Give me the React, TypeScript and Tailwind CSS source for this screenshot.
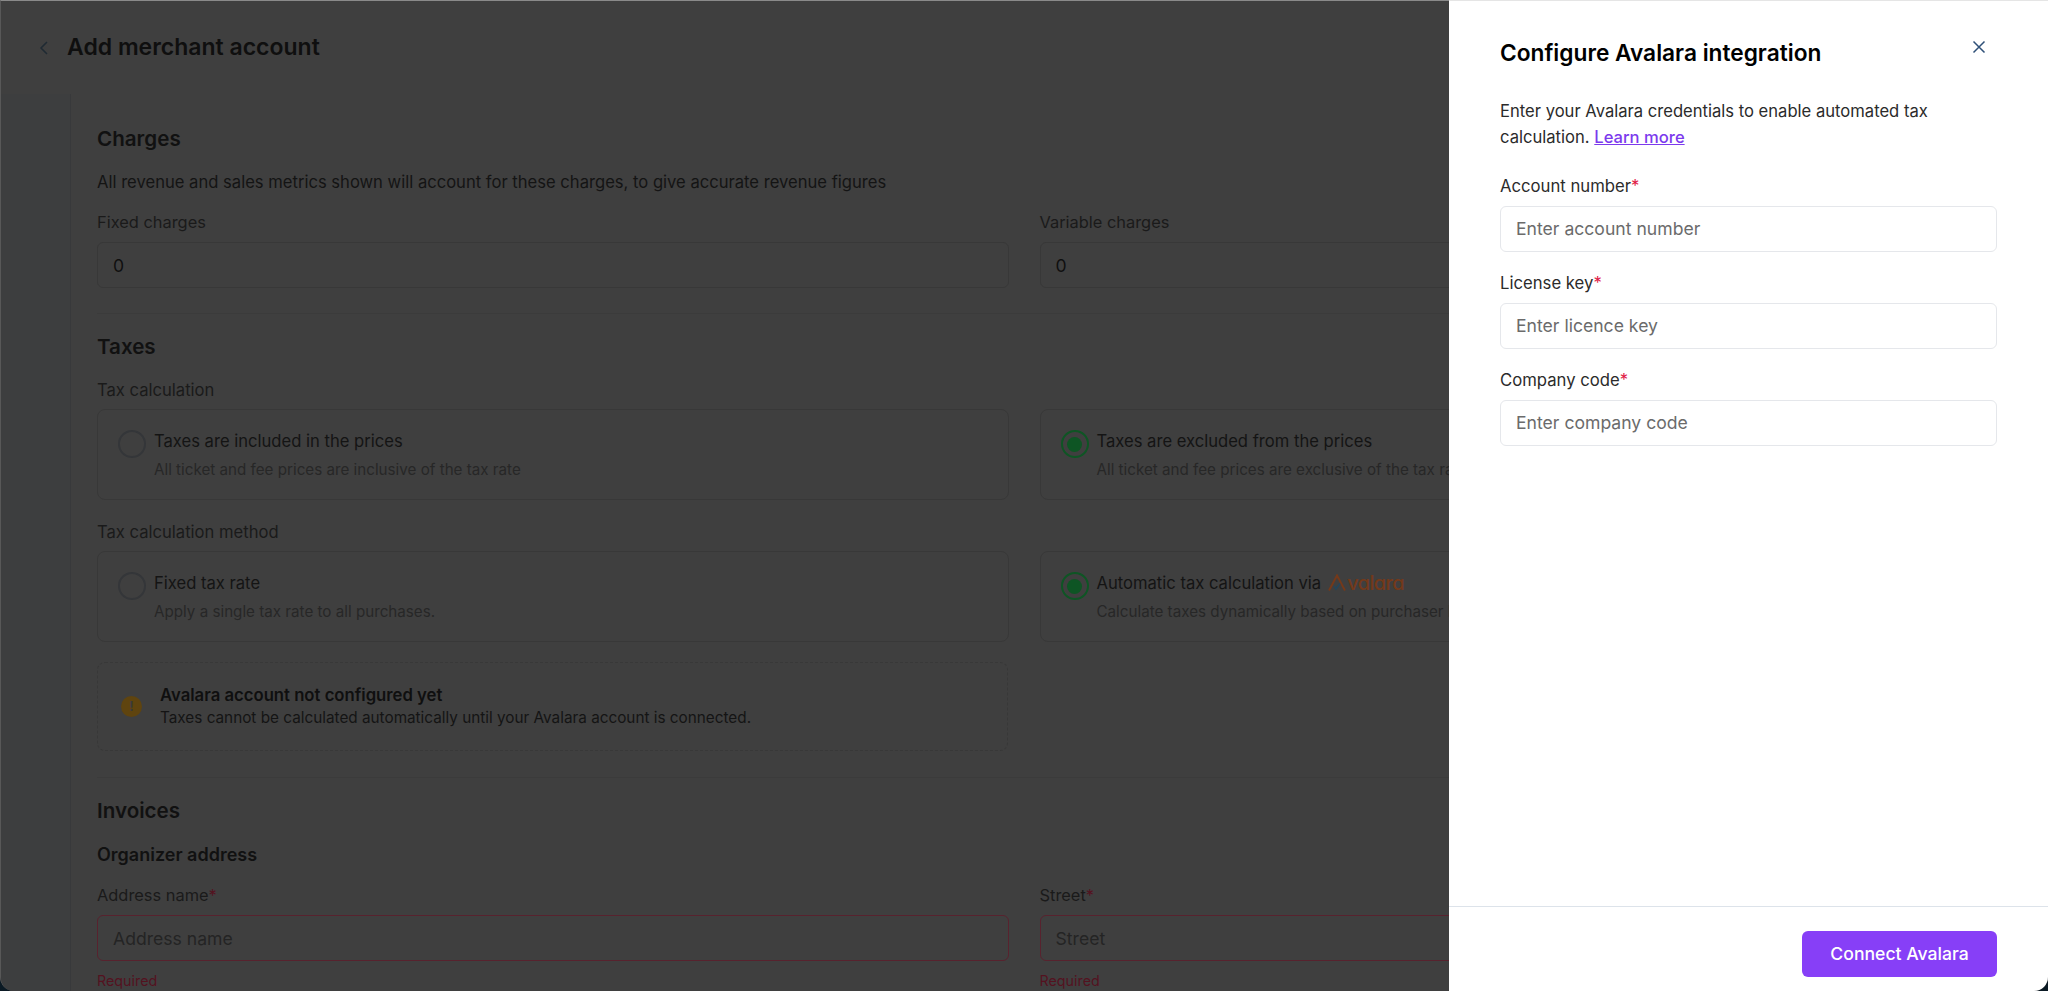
const font = "font-['Inter','Liberation_Sans',sans-serif]";

function Req() {
  return <span className="text-[#e11d48]">*</span>;
}

function DimField({ label, value, required, error, placeholder }: { label: string; value?: string; required?: boolean; error?: boolean; placeholder?: string }) {
  return (
    <div className="flex-1 min-w-0">
      <div className="text-[16.4px] leading-[24px] text-[#1a1a1a]">
        {label}
        {required && <span className="text-[#54121f]">*</span>}
      </div>
      <div className={`mt-2 h-[46px] rounded-md border px-[15px] pt-[2px] flex items-center text-[17.6px] ${error ? "border-[#58222e]" : "border-[#383838]"} ${value ? "text-[#0f0f0f]" : "text-[#242424]"}`}>
        {value ?? placeholder}
      </div>
      {error && <div className="mt-[10px] text-[14.3px] leading-[20px] text-[#54121f]">Required</div>}
    </div>
  );
}

function AvalaraLogo() {
  return (
    <span className="inline-flex items-end h-[18px] ml-[7px] text-[#74391a]">
      <svg width="18" height="17" viewBox="0 0 18 17" fill="none" className="mb-[1px]">
        <path d="M1 16.5 L9 1.5 L17 16.5" stroke="#74391a" strokeWidth="2" />
        <path d="M6 12 L8 15 L12 9.5" stroke="#24455a" strokeWidth="1.6" />
      </svg>
      <span className="ml-[1px] text-[20px] leading-[18px] font-medium tracking-[-0.6px] [font-feature-settings:'cv11']">valara</span>
    </span>
  );
}

function Choice({ selected, label, sub, logo }: { selected?: boolean; label: string; sub: string; logo?: boolean }) {
  return (
    <div className="flex-1 min-w-0 h-[91px] rounded-lg border border-[#383838] pt-[19px] pl-[20px] flex overflow-hidden">
      <div className={`mt-[1px] h-[28px] w-[28px] shrink-0 rounded-full border-2 flex items-center justify-center ${selected ? "border-[#0e5524]" : "border-[#343639]"}`}>
        {selected && <div className="h-[15px] w-[15px] rounded-full bg-[#0e5524]" />}
      </div>
      <div className="ml-[8px] whitespace-nowrap">
        <div className="flex items-center h-[24px] text-[16.6px] text-[#141414]">
          {label}
          {logo && <AvalaraLogo />}
        </div>
        <div className="mt-[7px] text-[15.2px] leading-[20px] text-[#272727]">{sub}</div>
      </div>
    </div>
  );
}

function PanelField({ label, placeholder }: { label: string; placeholder: string }) {
  return (
    <div>
      <div className="text-[16.7px] leading-[24px] text-[#2b2b2b]">
        {label}
        <Req />
      </div>
      <div className="mt-2 h-[46px] rounded-md border border-[#e5e7eb] px-[15px] pt-[1px] flex items-center text-[17.6px] text-[#6b6b6b]">{placeholder}</div>
    </div>
  );
}

export default function App() {
  return (
    <div className={`relative h-[991px] w-[2048px] overflow-hidden bg-[#0b1a24] ${font}`}>
      <div className="h-full w-full overflow-hidden rounded-b-[14px] bg-[#3f3f3f] border-t border-[#8a8a8a] border-l border-l-[#585858]">
        <header className="h-[93px] flex items-center pl-[37px]">
          <svg width="12" height="16" viewBox="0 0 12 16" fill="none" className="mt-[1px]">
            <path d="M9 2 L3 8 L9 14" stroke="#1f2a33" strokeWidth="1.5" />
          </svg>
          <h1 className="ml-[17px] -mt-[1px] text-[23px] font-semibold text-[#0f0f0f]">Add merchant account</h1>
        </header>
        <div className="flex h-full">
          <aside className="w-[70px] shrink-0 bg-[#3d3e3f] border-r border-[#38393b]" />
          <main className="flex-1 pl-[26px] pr-[97px]">
            <section className="pt-[31px] h-[220px] border-b border-[#3b3b3b]">
              <h2 className="text-[20.6px] leading-[28px] font-semibold text-[#111111]">Charges</h2>
              <p className="mt-[17px] text-[16.6px] leading-[24px] text-[#141414]">All revenue and sales metrics shown will account for these charges, to give accurate revenue figures</p>
              <div className="mt-[16px] flex gap-[31px]">
                <DimField label="Fixed charges" value="0" />
                <DimField label="Variable charges" value="0" />
              </div>
            </section>
            <section className="pt-[19px] h-[464px] border-b border-[#3b3b3b]">
              <h2 className="text-[20.6px] leading-[28px] font-semibold text-[#111111]">Taxes</h2>
              <div className="mt-[17px] text-[16.6px] leading-[24px] text-[#1a1a1a]">Tax calculation</div>
              <div className="mt-[7px] flex gap-[31px]">
                <Choice label="Taxes are included in the prices" sub="All ticket and fee prices are inclusive of the tax rate" />
                <Choice selected label="Taxes are excluded from the prices" sub="All ticket and fee prices are exclusive of the tax rate" />
              </div>
              <div className="mt-[20px] text-[16.6px] leading-[24px] text-[#1a1a1a]">Tax calculation method</div>
              <div className="mt-[7px] flex gap-[31px]">
                <Choice label="Fixed tax rate" sub="Apply a single tax rate to all purchases." />
                <Choice selected logo label="Automatic tax calculation via" sub="Calculate taxes dynamically based on purchaser location" />
              </div>
              <div className="mt-[20px] h-[89px] w-[911px] rounded-lg border border-dashed border-[#383838] flex items-center pl-[23px]">
                <div className="h-[21px] w-[21px] rounded-full bg-[#5f440f] flex items-center justify-center text-[13px] font-bold text-[#3a3a3a]">!</div>
                <div className="ml-[18px] -mt-[1px]">
                  <div className="text-[16.7px] leading-[24px] font-semibold text-[#0f0f0f]">Avalara account not configured yet</div>
                  <div className="text-[15.3px] leading-[22px] text-[#141414]">Taxes cannot be calculated automatically until your Avalara account is connected.</div>
                </div>
              </div>
            </section>
            <section className="pt-[19px]">
              <h2 className="text-[20.6px] leading-[28px] font-semibold text-[#111111]">Invoices</h2>
              <h3 className="mt-[17px] text-[18px] leading-[26px] font-semibold text-[#111111]">Organizer address</h3>
              <div className="mt-[15px] flex gap-[31px]">
                <DimField required error label="Address name" placeholder="Address name" />
                <DimField required error label="Street" placeholder="Street" />
              </div>
            </section>
          </main>
        </div>
      </div>

      <aside className="absolute right-0 top-0 bottom-0 w-[599px] bg-white border-t border-[#e5e5e5] rounded-br-[14px] flex flex-col">
        <div className="flex-1 pl-[51px] pr-[51px] pt-[36px]">
          <div className="flex items-start justify-between">
            <h2 className="text-[22.7px] leading-[32px] font-semibold text-black">Configure Avalara integration</h2>
            <svg width="14" height="14" viewBox="0 0 14 14" fill="none" className="mt-[3px] mr-[11px]">
              <path d="M1.5 1.5 L12.5 12.5 M12.5 1.5 L1.5 12.5" stroke="#2f5078" strokeWidth="1.5" />
            </svg>
          </div>
          <p className="mt-[29px] text-[16.6px] leading-[26px] text-[#2b2b2b]">
            Enter your Avalara credentials to enable automated tax calculation. <a className="text-[#7c3aed] underline font-medium">Learn more</a>
          </p>
          <div className="mt-[24px] flex flex-col gap-[19px]">
            <PanelField label="Account number" placeholder="Enter account number" />
            <PanelField label="License key" placeholder="Enter licence key" />
            <PanelField label="Company code" placeholder="Enter company code" />
          </div>
        </div>
        <footer className="h-[85px] border-t border-[#dde3ea] flex justify-end pt-[24px] pr-[51px]">
          <button className="h-[46px] w-[195px] rounded-md bg-[#873ff7] text-[17.6px] font-medium text-white">Connect Avalara</button>
        </footer>
      </aside>
    </div>
  );
}
